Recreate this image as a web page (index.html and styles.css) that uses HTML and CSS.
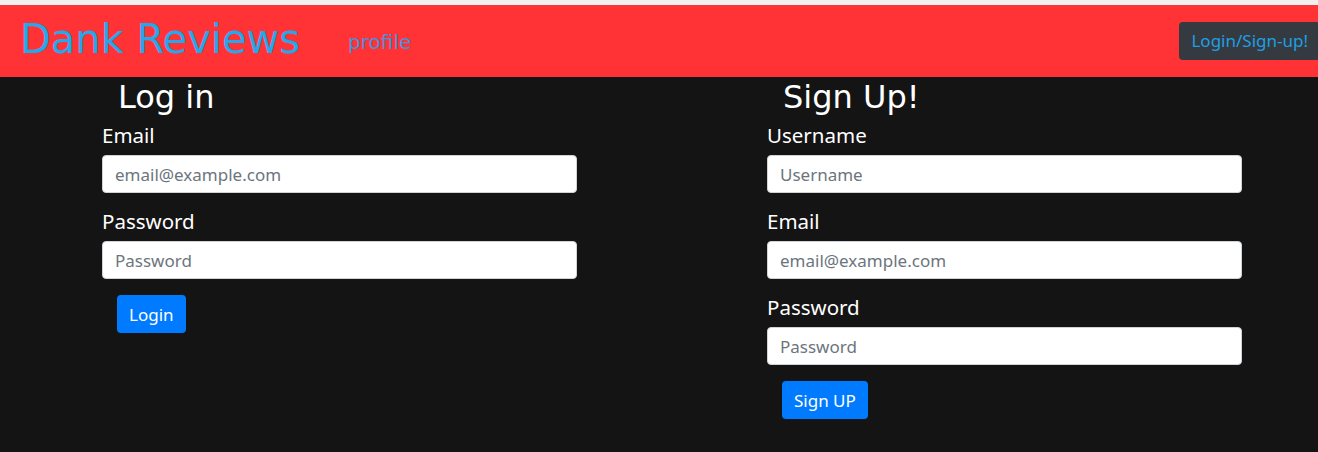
FILE: index.html
```html
<!DOCTYPE html>
<html lang="en">
<head>
<meta charset="utf-8">
<title>Dank Reviews</title>
<link rel="stylesheet" href="styles.css">
</head>
<body>
<div class="topstrip"></div>
<header class="navbar">
  <a class="brand" href="#">Dank Reviews</a>
  <a class="nav-link" href="#">profile</a>
  <button class="nav-btn" type="button">Login/Sign-up!</button>
</header>
<main class="forms">
  <section class="col">
    <h2 class="title">Log in</h2>
    <div class="group">
      <label class="label">Email</label>
      <input class="input" type="email" placeholder="email@example.com">
    </div>
    <div class="group">
      <label class="label">Password</label>
      <input class="input" type="password" placeholder="Password">
    </div>
    <button class="btn" type="button">Login</button>
  </section>
  <section class="col">
    <h2 class="title">Sign Up!</h2>
    <div class="group">
      <label class="label">Username</label>
      <input class="input" type="text" placeholder="Username">
    </div>
    <div class="group">
      <label class="label">Email</label>
      <input class="input" type="email" placeholder="email@example.com">
    </div>
    <div class="group">
      <label class="label">Password</label>
      <input class="input" type="password" placeholder="Password">
    </div>
    <button class="btn" type="button">Sign UP</button>
  </section>
</main>
</body>
</html>
```
FILE: styles.css
```css
html, body {
  margin: 0;
  padding: 0;
  background: #141414;
  overflow: hidden;
}
body {
  width: 1318px;
  height: 452px;
  font-family: "Noto Sans", "DejaVu Sans", sans-serif;
}
.topstrip {
  height: 5px;
  background: #f0f0f0;
}
.navbar {
  height: 72px;
  background: #ff3336;
  display: flex;
  align-items: center;
  padding-left: 20px;
  box-sizing: border-box;
}
.brand {
  font-family: "DejaVu Sans", Verdana, sans-serif;
  font-size: 40px;
  color: #24a8ec;
  text-decoration: none;
  line-height: 1;
  margin-top: -4px;
}
.nav-link {
  font-family: "DejaVu Sans", Verdana, sans-serif;
  font-size: 20px;
  color: #4b8fd8;
  text-decoration: none;
  margin-left: 48px;
  margin-top: 2px;
}
.nav-btn {
  margin-left: auto;
  margin-right: -2px;
  height: 38px;
  padding: 0 12px;
  background: #343a40;
  border: none;
  border-radius: 4px;
  color: #1f9fe4;
  font-family: "Noto Sans", sans-serif;
  font-size: 17px;
  margin-top: -1px;
  white-space: nowrap;
}
.forms {
  display: grid;
  grid-template-columns: 475px 475px;
  column-gap: 190px;
  padding-left: 102px;
}
.col {
  display: flex;
  flex-direction: column;
}
.title {
  font-family: "DejaVu Sans", Verdana, sans-serif;
  font-weight: normal;
  font-size: 32px;
  line-height: 38px;
  color: #fff;
  margin: 1px 0 7px 16px;
}
.group {
  display: flex;
  flex-direction: column;
  margin-bottom: 16px;
}
.label {
  color: #fff;
  font-size: 20.5px;
  line-height: 24px;
  margin-bottom: 8px;
}
.input {
  height: 38px;
  box-sizing: border-box;
  border: 1px solid #ced4da;
  border-radius: 4px;
  padding: 0 12px;
  font-family: "Noto Sans", sans-serif;
  font-size: 17px;
  background: #fff;
  outline: none;
}
.input::placeholder {
  color: #6c757d;
}
.btn {
  align-self: flex-start;
  margin-left: 15px;
  height: 38px;
  padding: 0 12px;
  border: none;
  border-radius: 4px;
  background: #007bff;
  color: #fff;
  font-family: "Noto Sans", sans-serif;
  font-size: 17px;
}
```
